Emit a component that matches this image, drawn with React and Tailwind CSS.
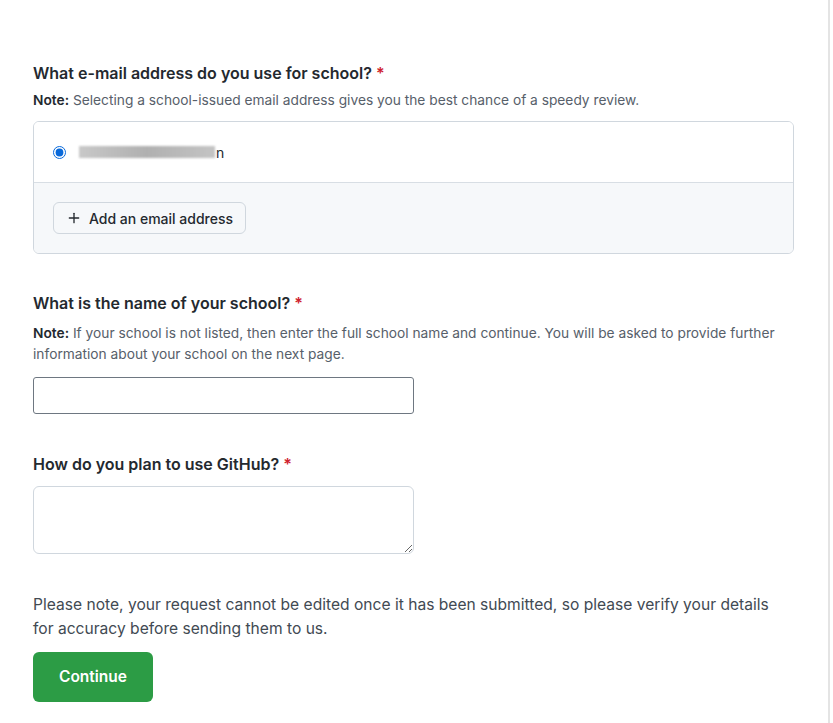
import { Plus } from "lucide-react";

function Label({ children }) {
  return (
    <div className="text-[16px] font-semibold text-[#24292f] leading-6">
      {children} <span className="text-[#cf222e]">*</span>
    </div>
  );
}

export default function App() {
  return (
    <div
      className="min-h-[723px] w-[833px] bg-white"
      style={{ fontFamily: 'Inter, "Liberation Sans", Arial, sans-serif' }}
    >
      <div className="flex">
        <div className="w-[830px] border-r-2 border-[#e4e4e4] min-h-[723px] pl-[33px] pt-[61px]">
          <Label>What e-mail address do you use for school?</Label>
          <p className="mt-[6px] text-[13.75px] text-[#57606a] leading-[18px]">
            <span className="font-semibold text-[#24292f]">Note:</span> Selecting a school-issued email address gives you the best chance of a speedy review.
          </p>

          <div className="mt-[12px] w-[761px] rounded-md border border-[#d0d7de] overflow-hidden">
            <div className="h-[61px] flex items-center pl-[19px] bg-white border-b border-[#d8dee4]">
              <input type="radio" defaultChecked className="w-[13px] h-[13px] accent-[#0969da] m-0" />
              <div className="ml-[13px] flex items-center">
                <div className="h-[12px] w-[136px] bg-gradient-to-r from-[#c8c8c8] via-[#b0b0b0] to-[#c4c4c4] blur-[1px]" />
                <span className="ml-[1px] text-[14px] text-[#24292f]">n</span>
              </div>
            </div>
            <div className="h-[70px] bg-[#f6f8fa] flex items-center pl-[19px]">
              <button className="h-[32px] px-[12px] flex items-center gap-[7px] rounded-md border border-[#d0d7de] bg-[#f6f8fa] text-[14px] font-medium text-[#24292f]">
                <Plus size={16} strokeWidth={2} />
                Add an email address
              </button>
            </div>
          </div>

          <div className="mt-[37px]">
            <Label>What is the name of your school?</Label>
          </div>
          <p className="mt-[8px] text-[13.75px] text-[#57606a] leading-[21px]">
            <span className="font-semibold text-[#24292f]">Note:</span> If your school is not listed, then enter the full school name and continue. You will be asked to provide further
            <br />
            information about your school on the next page.
          </p>
          <input
            type="text"
            className="mt-[12px] block w-[381px] h-[37px] rounded-[3px] border border-[#6e7781] bg-white px-3 text-sm outline-none"
          />

          <div className="mt-[38px]">
            <Label>How do you plan to use GitHub?</Label>
          </div>
          <textarea className="mt-[10px] block w-[381px] h-[68px] rounded-md border border-[#d0d7de] bg-white px-3 py-2 text-sm outline-none" />

          <p className="mt-[39px] text-[15.6px] text-[#424a53] leading-6">
            Please note, your request cannot be edited once it has been submitted, so please verify your details
            <br />
            for accuracy before sending them to us.
          </p>
          <button className="mt-[11px] h-[50px] w-[120px] rounded-md bg-[#2c9c45] text-white text-[15.5px] font-semibold">
            Continue
          </button>
        </div>
      </div>
    </div>
  );
}
